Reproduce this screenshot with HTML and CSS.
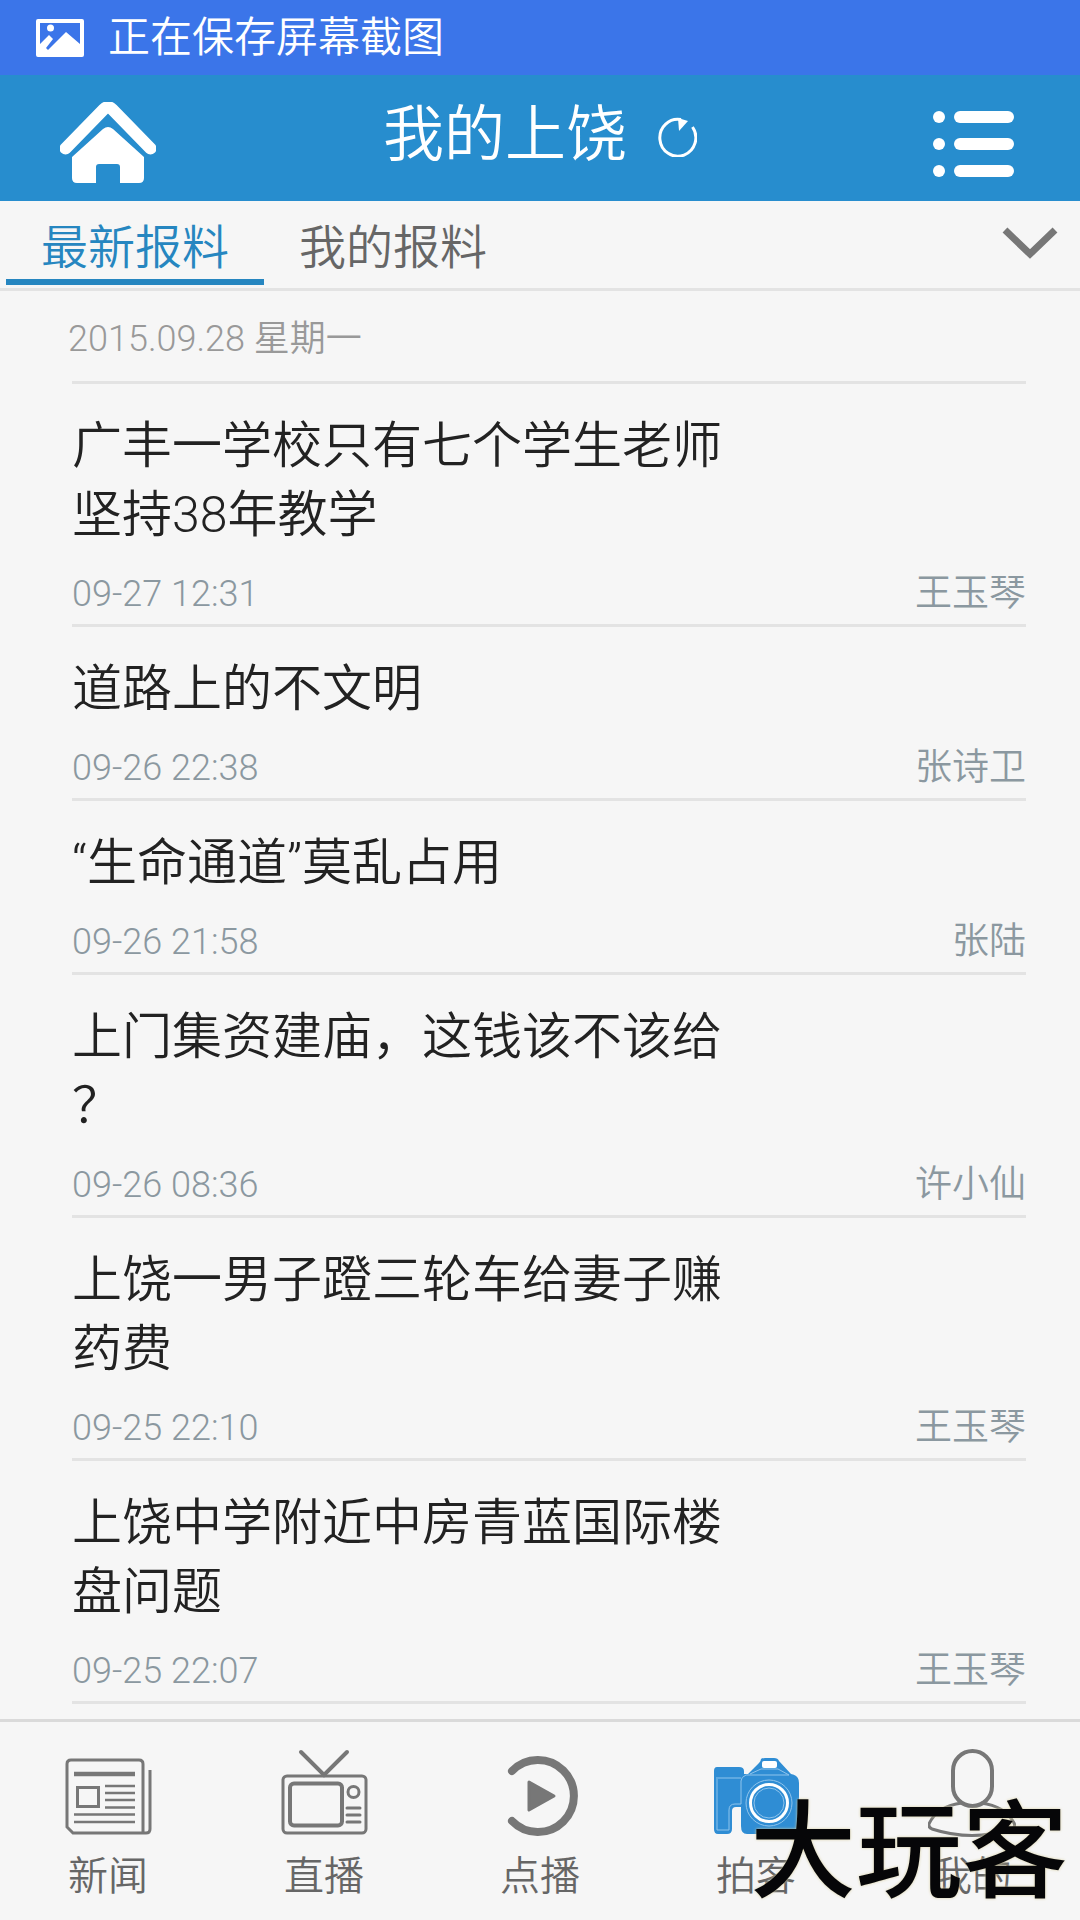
FILE: index.html
```html
<!DOCTYPE html>
<html lang="zh-CN">
<head>
<meta charset="utf-8">
<meta name="viewport" content="width=device-width, initial-scale=1">
<title>我的上饶</title>
<link rel="stylesheet" href="styles.css">
</head>
<body>
<div class="status">
  <svg class="status-icon" width="48" height="38" viewBox="0 0 48 38" aria-hidden="true"><path fill="#fff" fill-rule="evenodd" d="M2 0H46Q48 0 48 2V36Q48 38 46 38H2Q0 38 0 36V2Q0 0 2 0ZM4 4V25L13 16L17 20L10 29L12 31L30 13L44 25V4Z"/><circle cx="14.500" cy="9" r="3.500" fill="#fff"/></svg>
  <span>正在保存屏幕截图</span>
</div>

<header class="header">
  <a class="header-btn" href="#home" aria-label="首页">
    <svg width="96" height="81" viewBox="0 0 96 81"><path d="M5.500 46.500L44 7Q48 3.500 52 7L90.500 46.500" fill="none" stroke="#fff" stroke-width="12" stroke-linecap="round" stroke-linejoin="round"/><path fill="#fff" d="M12 55L43 27Q48 23 53 27L84 55V76Q84 81 79 81H60V65Q60 62 57 62H39Q36 62 36 65V81H17Q12 81 12 76Z"/></svg>
  </a>
  <div class="header-title">
    <h1>我的上饶</h1>
    <button class="refresh" type="button" aria-label="刷新">
      <svg width="40" height="40" viewBox="0 0 40 40"><path d="M35.500 10A18 18.500 0 1 1 24 2.500" fill="none" stroke="#fff" stroke-width="3"/><path fill="#fff" d="M21 1L31 4L22 14Z"/></svg>
    </button>
  </div>
  <button class="header-btn header-menu" type="button" aria-label="菜单">
    <svg width="81" height="66" viewBox="0 0 81 66" fill="#fff"><circle cx="6" cy="6" r="6"/><circle cx="6" cy="33" r="6"/><circle cx="6" cy="60" r="6"/><rect x="21" width="60" height="12" rx="6"/><rect x="21" y="27" width="60" height="12" rx="6"/><rect x="21" y="54" width="60" height="12" rx="6"/></svg>
  </button>
</header>

<nav class="tabs">
  <a class="tab tab-active" href="#latest">最新报料</a>
  <a class="tab" href="#mine">我的报料</a>
  <button class="tabs-more" type="button" aria-label="更多">
    <svg width="56" height="32" viewBox="0 0 56 32"><path d="M3 3L28 27L53 3" fill="none" stroke="#777" stroke-width="7"/></svg>
  </button>
</nav>

<main class="feed">
  <h2 class="date">2015.09.28 星期一</h2>
  <ul class="list">
    <li><a class="item" href="#1"><span class="title">广丰一学校只有七个学生老师坚持38年教学</span><span class="meta"><time>09-27 12:31</time><span class="author">王玉琴</span></span></a></li>
    <li><a class="item" href="#2"><span class="title">道路上的不文明</span><span class="meta"><time>09-26 22:38</time><span class="author">张诗卫</span></span></a></li>
    <li><a class="item" href="#3"><span class="title">“生命通道”莫乱占用</span><span class="meta"><time>09-26 21:58</time><span class="author">张陆</span></span></a></li>
    <li><a class="item" href="#4"><span class="title">上门集资建庙，这钱该不该给？</span><span class="meta"><time>09-26 08:36</time><span class="author">许小仙</span></span></a></li>
    <li><a class="item" href="#5"><span class="title">上饶一男子蹬三轮车给妻子赚药费</span><span class="meta"><time>09-25 22:10</time><span class="author">王玉琴</span></span></a></li>
    <li><a class="item" href="#6"><span class="title">上饶中学附近中房青蓝国际楼盘问题</span><span class="meta"><time>09-25 22:07</time><span class="author">王玉琴</span></span></a></li>
  </ul>
</main>

<footer class="footer">
  <nav class="bottom">
    <a class="nav-item" href="#news">
      <svg width="88" height="90" viewBox="0 0 88 90" fill="none" stroke="#777" stroke-width="2.500"><path d="M7 11H75Q79 11 79 15V84H9L3 78V15Q3 11 7 11ZM79 84H82Q86 84 86 80V21" stroke-width="3"/><path d="M10 25H71" stroke-width="4.500"/><rect x="13.500" y="38.500" width="21" height="19" stroke-width="3"/><path d="M41 37H71M41 44H71M41 51H71M41 58.500H71M10 65.500H71M10 73H71"/></svg>
      <span>新闻</span>
    </a>
    <a class="nav-item" href="#live">
      <svg width="88" height="90" viewBox="0 0 88 90" fill="none" stroke="#777" stroke-width="3"><path d="M21 3L44 26L67 3" stroke-linecap="round" stroke-width="4"/><rect x="3" y="27" width="83" height="57" rx="4"/><rect x="10" y="34.500" width="52" height="42" rx="4" stroke-width="4"/><circle cx="73.500" cy="43" r="5.500"/><path d="M67 59H80M67 66H80M67 73H80" stroke-linecap="round"/></svg>
      <span>直播</span>
    </a>
    <a class="nav-item" href="#vod">
      <svg width="88" height="90" viewBox="0 0 88 90"><path d="M16 22A36 36 0 1 1 16 72" fill="none" stroke="#777" stroke-width="8" stroke-linecap="round"/><path d="M33 33L58 47L33 61Z" fill="#777" stroke="#777" stroke-width="3" stroke-linejoin="round"/></svg>
      <span>点播</span>
    </a>
    <a class="nav-item" href="#camera">
      <svg width="88" height="90" viewBox="0 0 88 90"><path fill="#2f8dd4" d="M5 18H27Q32 18 32 22V25H36L47 14Q49 12 49 10Q50 9 53 9H62Q66 9 67 12L79 25Q87 26 87 34V78Q87 85 80 85H35Q29 85 29 77V58H24Q20 58 20 62V80Q20 85 15 85H6Q2 85 2 80V22Q2 18 5 18Z"/><rect x="50" y="12" width="15" height="7" rx="2" fill="#fff"/><path d="M4 29H29M5 30V81H17V61Q17 55 23 55H29V32Q29 28 34 26H77L66 20H49L38 25" fill="none" stroke="#8fc4ec" stroke-width="1"/><circle cx="57" cy="54" r="23" fill="none" stroke="#8fc4ec"/><circle cx="57" cy="54" r="18.500" fill="none" stroke="#fff" stroke-width="3"/><circle cx="57" cy="54" r="15" fill="none" stroke="#8fc4ec"/></svg>
      <span>拍客</span>
    </a>
    <a class="nav-item" href="#me">
      <svg width="88" height="90" viewBox="0 0 88 90" fill="none" stroke="#777" stroke-width="3"><rect x="25" y="2" width="39" height="55" rx="19.500" stroke-width="4"/><path d="M34 54Q9 57 1 75Q0 78 4 80Q44 93 84 80Q88 78 86 74Q77 57 53 54"/></svg>
      <span>我的</span>
    </a>
  </nav>
  <div class="watermark">大玩客</div>
</footer>
</body>
</html>
```
FILE: styles.css
```css
* { box-sizing: border-box; }

body {
  margin: 0;
  min-height: 100vh;
  display: flex;
  flex-direction: column;
  background: #f6f6f6;
  color: #222;
  font-family: Roboto, "Noto Sans CJK SC DemiLight", "Noto Sans CJK SC", sans-serif;
  font-weight: 350;
}

a { color: inherit; text-decoration: none; }
button { padding: 0; border: 0; background: none; font: inherit; }
svg { display: block; }
h1, h2, ul { margin: 0; padding: 0; font-weight: inherit; list-style: none; }

.status {
  display: flex;
  align-items: center;
  gap: 24px;
  height: 75px;
  padding: 0 36px;
  background: #3b75e9;
  color: #fff;
  font-size: 42px;
  line-height: 75px;
}

.header {
  display: grid;
  grid-template-columns: 1fr auto 1fr;
  align-items: center;
  height: 126px;
  padding: 9px 60px 0;
  background: #278dce;
  color: #fff;
}
.header-menu { justify-self: end; padding: 2px 6px 0 0; }
.header-title {
  display: flex;
  align-items: center;
  gap: 30px;
  padding-bottom: 16px;
}
.header-title h1 { font-size: 61px; line-height: 90px; }
.refresh { padding-top: 4px; }

.tabs {
  display: flex;
  height: 90px;
  padding: 0 22px 0 6px;
  border-bottom: 3px solid #e3e3e3;
  font-size: 47px;
  line-height: 86px;
  color: #666;
}
.tab {
  height: 84px;
  padding: 4px 35px 0;
  border-bottom: 6px solid transparent;
}
.tab-active { color: #2686c0; border-color: #2686c0; }
.tabs-more { margin-left: auto; padding-bottom: 4px; }

.feed { padding: 0 54px 15px 72px; }
.date {
  margin-left: -4px;
  padding: 24px 0 18px;
  font-size: 36px;
  line-height: 48px;
  color: #999;
}
.list { border-top: 3px solid #e3e3e3; }
.item {
  display: block;
  padding: 28px 0 6px;
  border-bottom: 3px solid #e3e3e3;
}
.title {
  display: block;
  width: 70%;
  font-size: 50px;
  line-height: 69px;
  line-break: anywhere;
}
.meta {
  display: flex;
  justify-content: space-between;
  padding-top: 20px;
  font-size: 36px;
  line-height: 48px;
  color: #8b98a0;
}
.author { font-size: 37px; }

.footer {
  position: relative;
  margin-top: auto;
  border-top: 3px solid #dadada;
}
.bottom {
  display: grid;
  grid-template-columns: repeat(5, 1fr);
  padding: 27px 0 13px;
}
.nav-item {
  display: flex;
  flex-direction: column;
  align-items: center;
  gap: 8px;
  font-size: 40px;
  line-height: 60px;
  color: #666;
}
/* Site mark laid over the last two tabs */
.watermark {
  position: absolute;
  right: 12px;
  bottom: 24px;
  font-family: "Noto Sans CJK SC", sans-serif;
  font-size: 106px;
  font-weight: 500;
  line-height: 106px;
  color: #060608;
  text-shadow: 0 0 3px #d8cfa0;
  pointer-events: none;
}
```
